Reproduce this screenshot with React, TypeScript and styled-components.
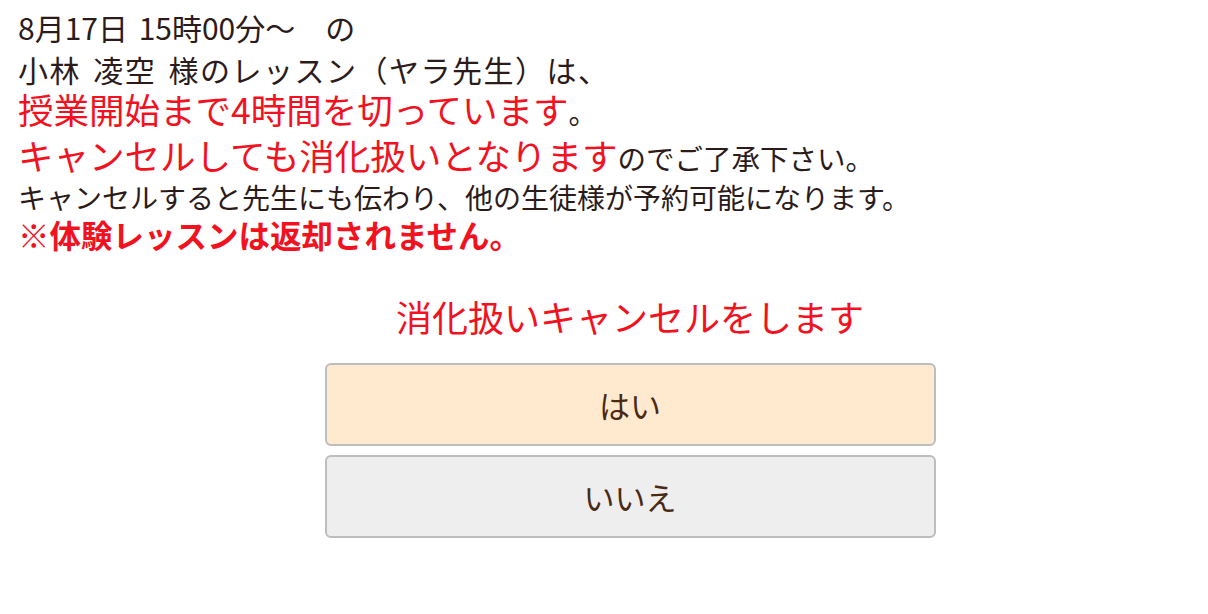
import React from 'react'
import styled, { createGlobalStyle } from 'styled-components'

const GlobalStyle = createGlobalStyle`
    html, body {
        margin: 0;
        padding: 0;
        background: #ffffff;
    }
    body {
        font-family: 'Noto Sans CJK JP', 'Noto Sans', sans-serif;
        color: #2b1b1b;
    }
`

const Page = styled.div`
    width: 1208px;
    padding-top: 9px;
`

const Notice = styled.div`
    padding-left: 18px;
`

const Line = styled.div<{ $size: number; $height: number; $tracking?: number }>`
    font-size: ${(p) => p.$size}px;
    line-height: ${(p) => p.$height}px;
    letter-spacing: ${(p) => p.$tracking ?? 0}px;
    word-spacing: 4px;
    white-space: nowrap;
`

const Tail = styled.span`
    margin-left: 30px;
`

const Red = styled.span<{ $bold?: boolean }>`
    color: #f2121f;
    font-weight: ${(p) => (p.$bold ? 700 : 400)};
`

const Small = styled.span`
    font-size: 28.5px;
`

const Confirm = styled.div`
    display: flex;
    flex-direction: column;
    align-items: center;
    padding: 37px 0 0 52px;
`

const Title = styled.div`
    color: #f2121f;
    font-size: 36px;
    line-height: 44px;
    margin-bottom: 25px;
`

const Choices = styled.div`
    display: flex;
    flex-direction: column;
    gap: 9px;
`

const ChoiceBtn = styled.button<{ $primary?: boolean }>`
    width: 611px;
    height: 83px;
    display: flex;
    align-items: center;
    justify-content: center;
    border: 2px solid #bdbdbd;
    border-radius: 6px;
    background: ${(p) => (p.$primary ? '#ffead0' : '#eeeeee')};
    color: #4a2a14;
    font-family: 'Noto Sans CJK JP', 'Noto Sans', sans-serif;
    font-size: 31px;
    cursor: pointer;
    outline: none;
    padding: 0;
`

export default function App() {
    return (
        <>
            <GlobalStyle />
            <Page>
                <Notice>
                    <Line $size={30} $height={37}>
                        8月17日 15時00分〜<Tail>の</Tail>
                    </Line>
                    <Line $size={30} $height={46} $tracking={1.5}>
                        小林 凌空 様のレッスン（ヤラ先生）は、
                    </Line>
                    <Line $size={35.5} $height={34}>
                        <Red>授業開始まで4時間を切っています</Red>
                        <Small>。</Small>
                    </Line>
                    <Line $size={35.5} $height={51}>
                        <Red>キャンセルしても消化扱いとなります</Red>
                        <Small>のでご了承下さい。</Small>
                    </Line>
                    <Line $size={28} $height={28}>
                        キャンセルすると先生にも伝わり、他の生徒様が予約可能になります。
                    </Line>
                    <Line $size={31.5} $height={46}>
                        <Red $bold>※体験レッスンは返却されません。</Red>
                    </Line>
                </Notice>
                <Confirm>
                    <Title>消化扱いキャンセルをします</Title>
                    <Choices>
                        <ChoiceBtn $primary>はい</ChoiceBtn>
                        <ChoiceBtn>いいえ</ChoiceBtn>
                    </Choices>
                </Confirm>
            </Page>
        </>
    )
}
